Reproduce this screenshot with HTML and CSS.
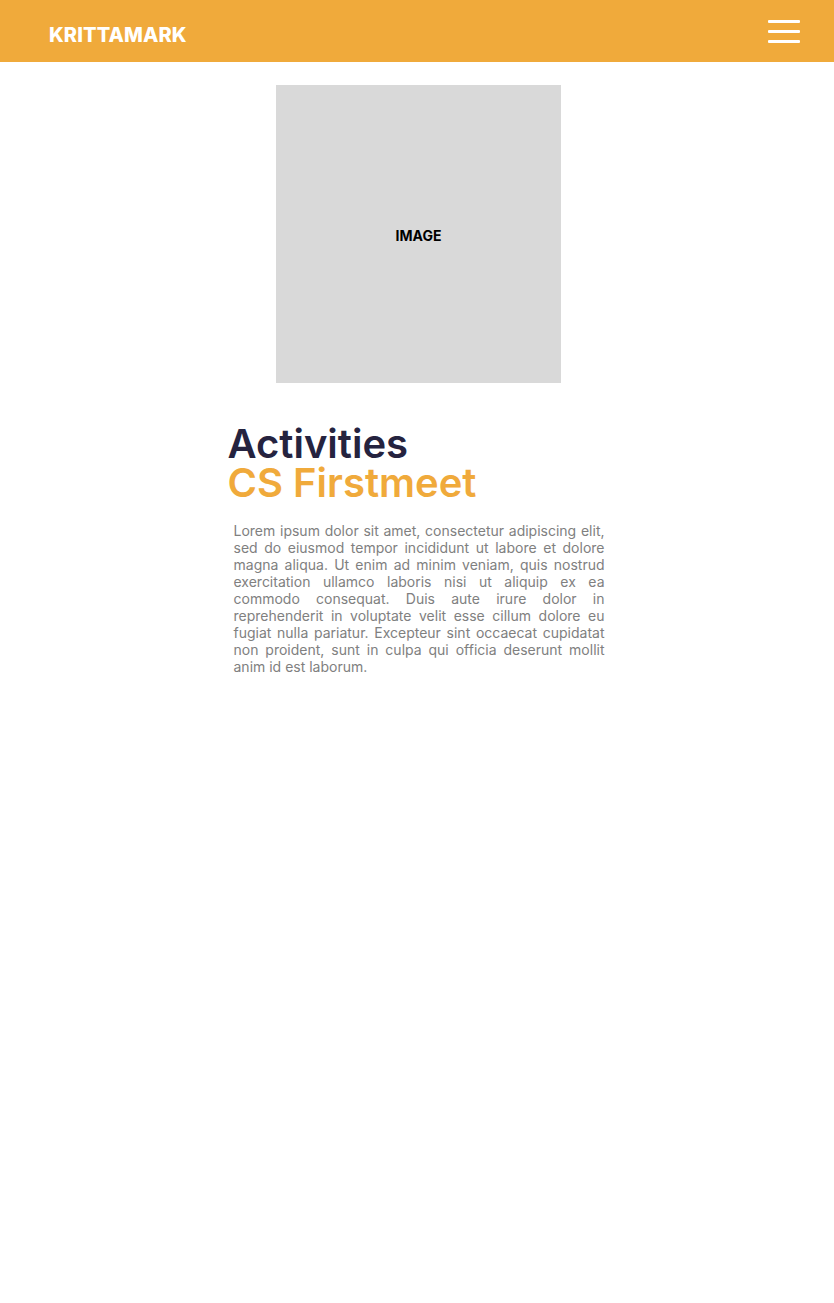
FILE: index.html
```html
<!DOCTYPE html>
<html>
<head>
<meta charset="utf-8">
<link rel="stylesheet" href="styles.css">
</head>
<body>
<header class="topbar">
  <div class="logo">KRITTAMARK</div>
  <button class="menu" aria-label="menu">
    <span></span><span></span><span></span>
  </button>
</header>
<main class="content">
  <div class="image-box">IMAGE</div>
  <section class="article">
    <h1 class="title">Activities</h1>
    <h2 class="subtitle">CS Firstmeet</h2>
    <p class="body">Lorem ipsum dolor sit amet, consectetur adipiscing elit, sed do eiusmod tempor incididunt ut labore et dolore magna aliqua. Ut enim ad minim veniam, quis nostrud exercitation ullamco laboris nisi ut aliquip ex ea commodo consequat. Duis aute irure dolor in reprehenderit in voluptate velit esse cillum dolore eu fugiat nulla pariatur. Excepteur sint occaecat cupidatat non proident, sunt in culpa qui officia deserunt mollit anim id est laborum.</p>
  </section>
</main>
</body>
</html>
```
FILE: styles.css
```css
* { box-sizing: border-box; }
body {
  margin: 0;
  background: #fff;
  font-family: Inter, "Noto Sans", sans-serif;
}
.topbar {
  height: 62px;
  background: #F0AA3B;
  display: flex;
  align-items: center;
  justify-content: space-between;
  padding: 0 34px 0 49px;
}
.logo {
  color: #fff;
  font-weight: 800;
  font-size: 20px;
  letter-spacing: 0.1px;
  padding-top: 8px;
}
.menu {
  background: none;
  border: 0;
  padding: 0;
  width: 32px;
  display: flex;
  flex-direction: column;
  gap: 7px;
  margin-top: 1px;
}
.menu span {
  display: block;
  height: 3px;
  background: #fff;
  border-radius: 1px;
}
.content {
  display: flex;
  flex-direction: column;
  align-items: center;
  padding-top: 23px;
}
.image-box {
  width: 285px;
  height: 298px;
  background: #D9D9D9;
  display: flex;
  align-items: center;
  justify-content: center;
  font-weight: 700;
  font-size: 14px;
  color: #000;
  margin-left: 3px;
  padding-top: 2px;
}
.article {
  width: 378px;
  margin-top: 41px;
  margin-left: -1px;
}
.title, .subtitle {
  margin: 0;
  font-size: 40px;
  font-weight: 600;
  line-height: 39px;
}
.title { color: #25233F; }
.subtitle { color: #F0AA3B; }
.body {
  margin: 20px 0 0 6px;
  width: 371px;
  font-size: 14px;
  line-height: 17px;
  color: #808080;
  text-align: justify;
}
```
